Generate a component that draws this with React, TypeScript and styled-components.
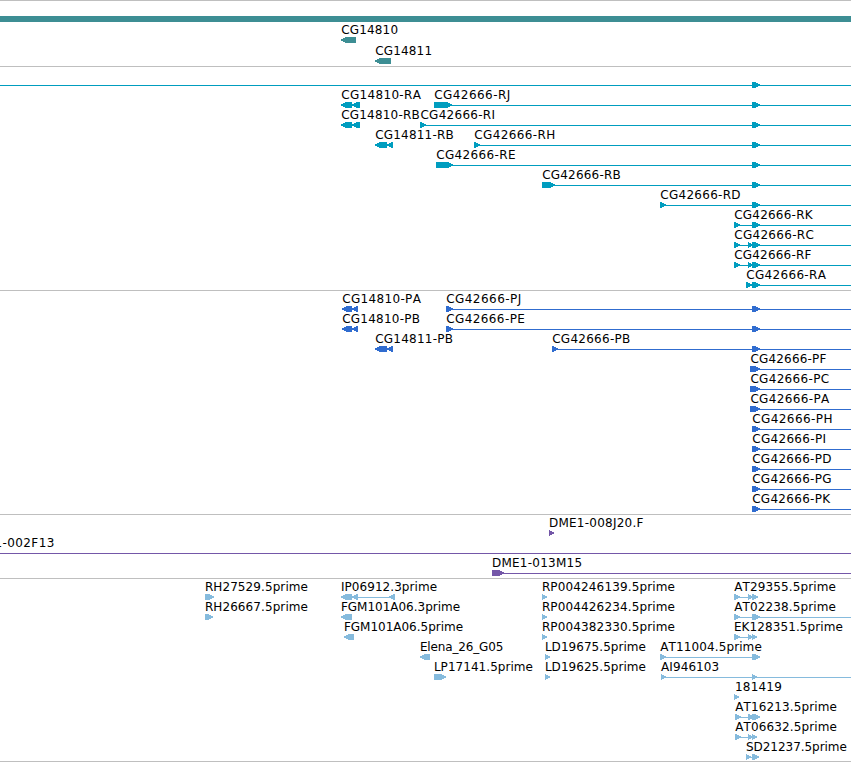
import React from 'react';
import styled, { createGlobalStyle } from 'styled-components';

const VIEW_WIDTH = 851;
const LABEL_FONT = '12px "DejaVu Sans", "Noto Sans", sans-serif';

// direction, start, end
type Exon = ['<' | '>', number, number];

interface Feature {
  name?: string;
  // left and right edge of the drawn name
  span?: [number, number];
  line?: [number, number];
  exons?: Exon[];
}

interface Track {
  id: string;
  color: string;
  rowHeight: number;
  bottom: number;
  bar?: boolean;
  rows: Feature[][];
}

const END = VIEW_WIDTH;
const shared: Exon = ['>', 752, 760];

const tracks: Track[] = [
  {
    id: 'gene',
    color: '#3d8e94',
    rowHeight: 21,
    bottom: 0,
    bar: true,
    rows: [
      [{ name: 'CG14810', span: [341.2, 397.4], exons: [['<', 341, 356]] }],
      [{ name: 'CG14811', span: [375.2, 431.4], exons: [['<', 375, 391]] }],
    ],
  },
  {
    id: 'transcript',
    color: '#009dbf',
    rowHeight: 20,
    bottom: 1,
    rows: [
      [{ line: [0, END], exons: [shared] }],
      [
        { name: 'CG14810-RA', span: [341.2, 421.7], exons: [['<', 341, 352], ['<', 352, 360]] },
        { name: 'CG42666-RJ', span: [434.2, 509.7], line: [450, END], exons: [['>', 434, 452], shared] },
      ],
      [
        { name: 'CG14810-RB', span: [341.2, 419.5], exons: [['<', 341, 352], ['<', 352, 360]] },
        { name: 'CG42666-RI', span: [420.4, 494.5], line: [422, END], exons: [['>', 420, 426], shared] },
      ],
      [
        { name: 'CG14811-RB', span: [375.2, 453.5], exons: [['<', 375, 387], ['<', 387, 393]] },
        { name: 'CG42666-RH', span: [474.2, 554.2], line: [476, END], exons: [['>', 474, 480], shared] },
      ],
      [{ name: 'CG42666-RE', span: [436.2, 515], line: [450, END], exons: [['>', 436, 453], shared] }],
      [{ name: 'CG42666-RB', span: [542.2, 620.5], line: [552, END], exons: [['>', 542, 555], shared] }],
      [{ name: 'CG42666-RD', span: [660.3, 740.3], line: [662, END], exons: [['>', 660, 666], shared] }],
      [{ name: 'CG42666-RK', span: [734.2, 813.7], line: [736, END], exons: [['>', 734, 740], shared] }],
      [{ name: 'CG42666-RC', span: [734.2, 813.5], line: [736, END], exons: [['>', 734, 740], ['>', 748, 753], shared] }],
      [{ name: 'CG42666-RF', span: [734.2, 811.5], line: [736, END], exons: [['>', 734, 740], ['>', 748, 753], shared] }],
      [{ name: 'CG42666-RA', span: [746.2, 826.7], line: [748, END], exons: [['>', 746, 752], shared] }],
    ],
  },
  {
    id: 'cds',
    color: '#306ccf',
    rowHeight: 20,
    bottom: 1,
    rows: [
      [
        { name: 'CG14810-PA', span: [342.2, 421.7], exons: [['<', 342, 352], ['<', 352, 358]] },
        { name: 'CG42666-PJ', span: [446.2, 520.7], line: [448, END], exons: [['>', 446, 453], shared] },
      ],
      [
        { name: 'CG14810-PB', span: [342.2, 419.7], exons: [['<', 342, 352], ['<', 352, 358]] },
        { name: 'CG42666-PE', span: [446.2, 524.3], line: [448, END], exons: [['>', 446, 453], shared] },
      ],
      [
        { name: 'CG14811-PB', span: [375.2, 452.7], exons: [['<', 375, 387], ['<', 387, 393]] },
        { name: 'CG42666-PB', span: [552.2, 630], line: [554, END], exons: [['>', 552, 558], shared] },
      ],
      [{ name: 'CG42666-PF', span: [750.4, 826.5], line: [754, END], exons: [['>', 750, 760]] }],
      [{ name: 'CG42666-PC', span: [750.4, 828.7], line: [754, END], exons: [['>', 750, 760]] }],
      [{ name: 'CG42666-PA', span: [750.4, 830], line: [754, END], exons: [['>', 750, 760]] }],
      [{ name: 'CG42666-PH', span: [752.2, 831.5], line: [754, END], exons: [shared] }],
      [{ name: 'CG42666-PI', span: [752.2, 825.5], line: [754, END], exons: [shared] }],
      [{ name: 'CG42666-PD', span: [752.2, 831.3], line: [754, END], exons: [shared] }],
      [{ name: 'CG42666-PG', span: [752.2, 831.3], line: [754, END], exons: [shared] }],
      [{ name: 'CG42666-PK', span: [752.2, 831.2], line: [754, END], exons: [shared] }],
    ],
  },
  {
    id: 'bac',
    color: '#7457a8',
    rowHeight: 20,
    bottom: 1,
    rows: [
      [{ name: 'DME1-008J20.F', span: [549.9, 643.5], exons: [['>', 549, 554]] }],
      [{ name: 'DME1-002F13', span: [-33, 53.7], line: [0, END] }],
      [{ name: 'DME1-013M15', span: [492.9, 581.5], line: [500, END], exons: [['>', 492, 504]] }],
    ],
  },
  {
    id: 'est',
    color: '#86bbdd',
    rowHeight: 20,
    bottom: 0,
    rows: [
      [
        { name: 'RH27529.5prime', span: [205.9, 307.6], exons: [['>', 205, 214]] },
        { name: 'IP06912.3prime', span: [341.9, 436.7], line: [350, 394], exons: [['<', 341, 352], ['<', 352, 358], ['<', 389, 395]] },
        { name: 'RP004246139.5prime', span: [542.9, 674.6], exons: [['>', 542, 547]] },
        { name: 'AT29355.5prime', span: [734.3, 835.5], line: [736, 756], exons: [['>', 734, 740], ['>', 748, 753], ['>', 752, 758]] },
      ],
      [
        { name: 'RH26667.5prime', span: [205.9, 307.6], exons: [['>', 205, 213]] },
        { name: 'FGM101A06.3prime', span: [341.9, 459.7], exons: [['<', 341, 352]] },
        { name: 'RP004426234.5prime', span: [542.9, 674.6], exons: [['>', 542, 547]] },
        { name: 'AT02238.5prime', span: [734.3, 835.5], line: [736, END], exons: [['>', 734, 740], shared] },
      ],
      [
        { name: 'FGM101A06.5prime', span: [344.9, 462.7], exons: [['<', 344, 354]] },
        { name: 'RP004382330.5prime', span: [542.9, 674.6], exons: [['>', 542, 547]] },
        { name: 'EK128351.5prime', span: [734.9, 842.5], line: [736, 755], exons: [['>', 734, 740], ['>', 748, 753], ['>', 752, 757]] },
      ],
      [
        { name: 'Elena_26_G05', span: [420.9, 502.7], exons: [['<', 420, 430]] },
        { name: 'LD19675.5prime', span: [545.9, 645.6], exons: [['>', 545, 550]] },
        { name: 'AT11004.5prime', span: [660.3, 761.4], line: [662, 758], exons: [['>', 660, 666], shared] },
      ],
      [
        { name: 'LP17141.5prime', span: [434.9, 532.6], exons: [['>', 434, 446]] },
        { name: 'LD19625.5prime', span: [545.9, 645.6], exons: [['>', 545, 550]] },
        { name: 'AI946103', span: [661.1, 718.5], line: [663, END], exons: [['>', 661, 666], ['>', 752, 757]] },
      ],
      [{ name: '181419', span: [736, 781.2], exons: [['>', 734, 739]] }],
      [{ name: 'AT16213.5prime', span: [735.3, 836.5], line: [737, 758], exons: [['>', 735, 741], ['>', 748, 754], shared] }],
      [{ name: 'AT06632.5prime', span: [735.3, 836.5], line: [737, 755], exons: [['>', 735, 741], ['>', 748, 753], ['>', 752, 757]] }],
      [{ name: 'SD21237.5prime', span: [746, 846.5], line: [748, 756], exons: [['>', 746, 751], ['>', 752, 759]] }],
    ],
  },
];

const GlobalStyle = createGlobalStyle`
  body {
    margin: 0;
    background: #fff;
    overflow: hidden;
  }
`;

const pen = document.createElement('canvas').getContext('2d')!;

// offset and letter spacing that make a name fill its span
const fitName = (name: string, [left, right]: [number, number]) => {
  pen.font = LABEL_FONT;
  pen.fontKerning = 'none';
  const m = pen.measureText(name);
  const ink = m.actualBoundingBoxRight + m.actualBoundingBoxLeft;
  return {
    offset: left + m.actualBoundingBoxLeft,
    spacing: (right - left - ink) / (name.length - 1),
  };
};

const exonPoints = ([dir, start, end]: Exon) => {
  const head = Math.min(end - start, 6);
  if (dir === '>') {
    const neck = end - head;
    return `${start},13 ${neck + 0.5},13 ${end},15.4 ${end},16.6 ${neck + 0.5},19 ${start},19`;
  }
  const neck = start + head;
  return `${end},13 ${neck - 0.5},13 ${start},15.4 ${start},16.6 ${neck - 0.5},19 ${end},19`;
};

const FeatureName = ({ name, span }: { name: string; span: [number, number] }) => {
  const { offset, spacing } = fitName(name, span);
  return <StyledName $offset={offset} $spacing={spacing}>{name}</StyledName>;
};

const FeatureRow = ({ features, track }: { features: Feature[]; track: Track }) => (
  <StyledRow $height={track.rowHeight}>
    <StyledLane viewBox={`0 0 ${VIEW_WIDTH} 20`} fill={track.color} shapeRendering="crispEdges">
      {features.map((feature, i) => (
        <g key={i}>
          {feature.line && (
            <rect x={feature.line[0]} y={16} width={feature.line[1] - feature.line[0]} height={1} />
          )}
          {feature.exons?.map((exon, j) => <polygon key={j} points={exonPoints(exon)} />)}
        </g>
      ))}
    </StyledLane>
    {features.map(
      ({ name, span }) => name && span && <FeatureName key={name} name={name} span={span} />
    )}
  </StyledRow>
);

const App = () => (
  <>
    <GlobalStyle />
    <StyledBrowser>
      {tracks.map((track) => (
        <StyledTrack key={track.id} $bottom={track.bottom}>
          {track.bar && <StyledBar $color={track.color} />}
          {track.rows.map((features, i) => (
            <FeatureRow key={i} features={features} track={track} />
          ))}
        </StyledTrack>
      ))}
    </StyledBrowser>
  </>
);

export default App;

const StyledBrowser = styled.main`
  display: flex;
  flex-direction: column;
  width: ${VIEW_WIDTH}px;
  height: 762px;
  overflow: hidden;
  border-bottom: 1px solid #bfbfbf;
  box-sizing: border-box;
  background: #fff;
`;

const StyledTrack = styled.section<{ $bottom: number }>`
  border-top: 1px solid #bfbfbf;
  padding: 2px 0 ${({ $bottom }) => $bottom}px;
`;

const StyledBar = styled.div<{ $color: string }>`
  height: 6px;
  margin: 13px 0 2px;
  background: ${({ $color }) => $color};
`;

const StyledRow = styled.div<{ $height: number }>`
  display: grid;
  grid-template-columns: ${VIEW_WIDTH}px;
  align-items: start;
  height: ${({ $height }) => $height}px;
`;

const StyledLane = styled.svg`
  grid-area: 1 / 1;
  width: ${VIEW_WIDTH}px;
  height: 20px;
`;

const StyledName = styled.span<{ $offset: number; $spacing: number }>`
  grid-area: 1 / 1;
  justify-self: start;
  margin-left: ${({ $offset }) => $offset}px;
  font: ${LABEL_FONT};
  line-height: 12px;
  font-kerning: none;
  letter-spacing: ${({ $spacing }) => $spacing}px;
  white-space: nowrap;
  color: #000;
`;
